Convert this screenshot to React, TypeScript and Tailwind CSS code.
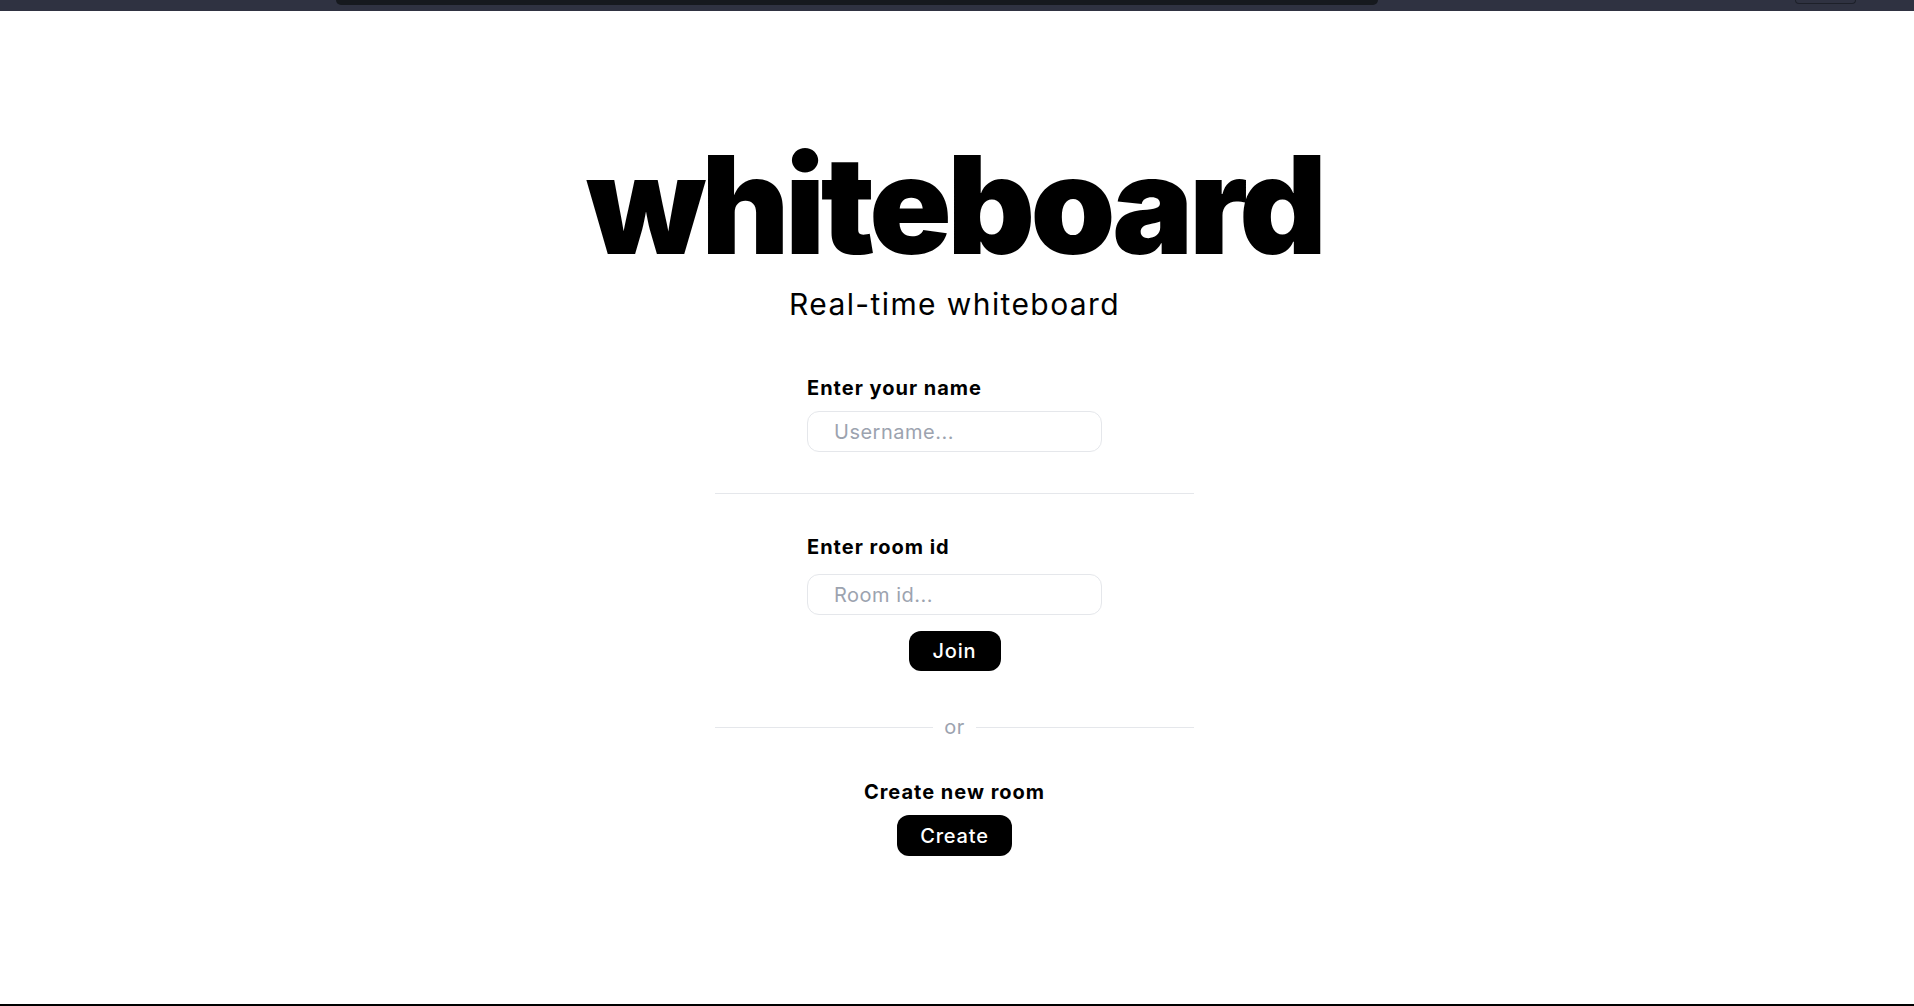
import { useState } from 'react';

function TopBar() {
  return (
    <div className="flex h-[11px] shrink-0 items-start bg-[#2f3241]">
      <div className="ml-[336px] h-[5px] w-[1042px] rounded-b-md bg-[#16191e]" />
      <div className="ml-auto mr-[58px] h-[4px] w-[61px] rounded-b-md border-x border-b border-[#1d2029]" />
    </div>
  );
}

function Divider({ label }: { label?: string }) {
  if (!label) {
    return <div className="h-px w-[479px] bg-[#e5e7eb]" />;
  }
  return (
    <div className="flex w-[479px] items-center gap-[11px]">
      <div className="h-px flex-1 bg-[#e5e7eb]" />
      <span className="text-[20px] leading-5 tracking-[0.5px] text-[#9ca3af]">{label}</span>
      <div className="h-px flex-1 bg-[#e5e7eb]" />
    </div>
  );
}

export default function App() {
  const [username, setUsername] = useState('');
  const [roomId, setRoomId] = useState('');

  return (
    <div className="flex min-h-screen flex-col bg-white font-['Inter',sans-serif] text-black">
      <TopBar />
      <main className="flex flex-1 flex-col items-center pr-[5px]">
        {/* heading */}
        <h1 className="mt-[126px] text-[136px] font-black leading-none tracking-[-4.5px]">
          whiteboard
        </h1>
        <p className="mt-[16px] text-[30px] leading-[30px] tracking-[1.4px]">Real-time whiteboard</p>

        {/* name */}
        <div className="mt-[55px] flex w-[295px] flex-col gap-[9px]">
          <label className="text-[20px] font-bold leading-7 tracking-[1px]">Enter your name</label>
          <input
            value={username}
            onChange={(e) => setUsername(e.target.value)}
            placeholder="Username..."
            className="h-[41px] w-full rounded-xl border border-[#e5e7eb] px-[26px] text-[20px] tracking-[0.5px] outline-none placeholder:text-[#9ca3af]"
          />
        </div>

        <div className="mt-[41px]">
          <Divider />
        </div>

        {/* join */}
        <div className="mt-[39px] flex w-[295px] flex-col gap-[13px]">
          <label className="text-[20px] font-bold leading-7 tracking-[1px]">Enter room id</label>
          <input
            value={roomId}
            onChange={(e) => setRoomId(e.target.value)}
            placeholder="Room id..."
            className="h-[41px] w-full rounded-xl border border-[#e5e7eb] px-[26px] text-[20px] tracking-[0.5px] outline-none placeholder:text-[#9ca3af]"
          />
        </div>
        <button className="mt-[16px] h-[40px] w-[92px] rounded-xl bg-black text-[20px] font-medium tracking-[0.8px] text-white">
          Join
        </button>

        <div className="mt-[46px]">
          <Divider label="or" />
        </div>

        {/* create */}
        <p className="mt-[41px] text-[20px] font-bold leading-7 tracking-[1px]">Create new room</p>
        <button className="mt-[9px] h-[41px] w-[115px] rounded-xl bg-black text-[20px] font-medium tracking-[0.8px] text-white">
          Create
        </button>
      </main>
      <div className="h-[2px] shrink-0 bg-black" />
    </div>
  );
}
